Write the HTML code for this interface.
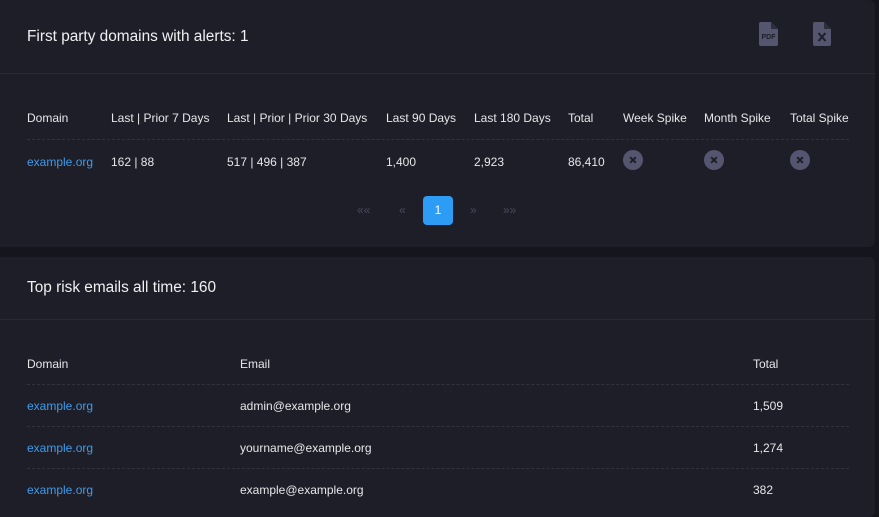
<!DOCTYPE html><html><head><style>
body{margin:0;width:879px;height:510px;background:#15151d;font-family:"Liberation Sans",sans-serif;color:#e6e6ea;position:relative;overflow:hidden}
.card{position:absolute;left:0;width:875px;background:#1e1e29;border-radius:0 6px 6px 0}
.t{position:absolute;font-size:12px;white-space:nowrap;line-height:14px}
.h{position:absolute;left:27px;font-size:15.4px;font-weight:500;color:#f0f0f3;line-height:18px}
.hr{position:absolute;left:0;right:0;height:1px;background:#2a2a37}
.dl{position:absolute;left:27px;width:822px;height:0;border-top:1px dashed #33333f}
.a{color:#3d9be9}
.x{position:absolute;width:20px;height:20px;border-radius:50%;background:#55556f}
.x:before,.x:after{content:"";position:absolute;left:6px;top:9px;width:8px;height:2px;background:#1e1e29;transform:rotate(45deg)}
.x:after{transform:rotate(-45deg)}
.pg{position:absolute;font-size:12px;color:#4a4a5c}
</style></head><body>
<div class="card" style="top:0;height:247px">
<div class="h" style="top:28px">First party domains with alerts: 1</div>
<svg style="position:absolute;left:759px;top:22px" width="19" height="24" viewBox="0 0 19 24"><path d="M2 0H12L19 7V22a2 2 0 0 1-2 2H2a2 2 0 0 1-2-2V2a2 2 0 0 1 2-2z" fill="#55556f"/><path d="M12 0V7H19" fill="#2e2e3d"/><text x="9.5" y="17" font-size="7" font-weight="bold" fill="#1e1e29" text-anchor="middle" font-family="Liberation Sans">PDF</text></svg>
<svg style="position:absolute;left:813px;top:22px" width="18" height="24" viewBox="0 0 18 24"><path d="M2 0H11L18 7V22a2 2 0 0 1-2 2H2a2 2 0 0 1-2-2V2a2 2 0 0 1 2-2z" fill="#55556f"/><path d="M11 0V7H18" fill="#2e2e3d"/><path d="M5.5 11L12.5 19M12.5 11L5.5 19" stroke="#1e1e29" stroke-width="2"/></svg>
<div class="hr" style="top:73px"></div>
<div class="t" style="left:27px;top:111px">Domain</div>
<div class="t" style="left:111px;top:111px">Last | Prior 7 Days</div>
<div class="t" style="left:227px;top:111px">Last | Prior | Prior 30 Days</div>
<div class="t" style="left:386px;top:111px">Last 90 Days</div>
<div class="t" style="left:474px;top:111px">Last 180 Days</div>
<div class="t" style="left:568px;top:111px">Total</div>
<div class="t" style="left:623px;top:111px">Week Spike</div>
<div class="t" style="left:704px;top:111px">Month Spike</div>
<div class="t" style="left:790px;top:111px">Total Spike</div>
<div class="dl" style="top:139px"></div>
<div class="t a" style="left:27px;top:155px">example.org</div>
<div class="t" style="left:111px;top:155px">162 | 88</div>
<div class="t" style="left:227px;top:155px">517 | 496 | 387</div>
<div class="t" style="left:386px;top:155px">1,400</div>
<div class="t" style="left:474px;top:155px">2,923</div>
<div class="t" style="left:568px;top:155px">86,410</div>
<div class="x" style="left:623px;top:150px"></div>
<div class="x" style="left:704px;top:150px"></div>
<div class="x" style="left:790px;top:150px"></div>
<div class="pg" style="left:357px;top:203px">««</div>
<div class="pg" style="left:399px;top:203px">«</div>
<div style="position:absolute;left:423px;top:196px;width:30px;height:29px;border-radius:4px;background:#2d9cf5;color:#fff;font-size:12px;text-align:center;line-height:29px">1</div>
<div class="pg" style="left:470px;top:203px">»</div>
<div class="pg" style="left:503px;top:203px">»»</div>
</div>
<div class="card" style="top:257px;height:260px">
<div class="h" style="top:22px">Top risk emails all time: 160</div>
<div class="hr" style="top:62px"></div>
<div class="t" style="left:27px;top:100px">Domain</div>
<div class="t" style="left:240px;top:100px">Email</div>
<div class="t" style="left:753px;top:100px">Total</div>
<div class="dl" style="top:127px"></div>
<div class="t a" style="left:27px;top:142px">example.org</div>
<div class="t" style="left:240px;top:142px">admin@example.org</div>
<div class="t" style="left:753px;top:142px">1,509</div>
<div class="dl" style="top:169px"></div>
<div class="t a" style="left:27px;top:184px">example.org</div>
<div class="t" style="left:240px;top:184px">yourname@example.org</div>
<div class="t" style="left:753px;top:184px">1,274</div>
<div class="dl" style="top:211px"></div>
<div class="t a" style="left:27px;top:226px">example.org</div>
<div class="t" style="left:240px;top:226px">example@example.org</div>
<div class="t" style="left:753px;top:226px">382</div>
</div>
</body></html>
